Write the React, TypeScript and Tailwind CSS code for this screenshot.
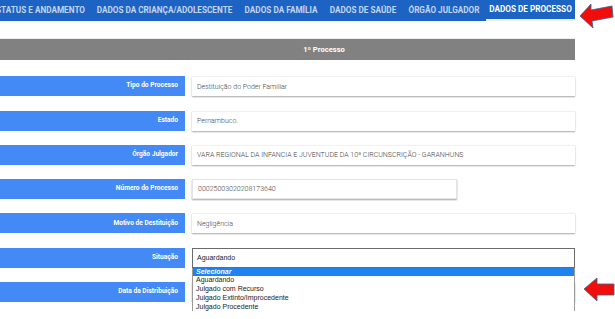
import React from "react";

const tabs = [
  { label: "STATUS E ANDAMENTO", w: "w-[91px] justify-end pr-[6px]" },
  { label: "DADOS DA CRIANÇA/ADOLESCENTE", w: "w-[147px] justify-center" },
  { label: "DADOS DA FAMÍLIA", w: "w-[86px] justify-center" },
  { label: "DADOS DE SAÚDE", w: "w-[78px] justify-center" },
  { label: "ÓRGÃO JULGADOR", w: "w-[84px] justify-center" },
  { label: "DADOS DE PROCESSO", w: "w-[89px] justify-center" },
];

const options = [
  "Selecionar",
  "Aguardando",
  "Julgado com Recurso",
  "Julgado Extinto/Improcedente",
  "Julgado Procedente",
];

function Label({ text }: { text: string }) {
  return (
    <div className="w-[185px] shrink-0 h-full bg-[#448af7] flex items-center justify-end pr-[7px] text-white text-[6.6px] font-bold">
      {text}
    </div>
  );
}

function Field({ label, value, narrow }: { label: string; value: string; narrow?: boolean }) {
  return (
    <div className="flex gap-[7px] h-[20px] mt-[14.3px]">
      <Label text={label} />
      <div
        className={`${narrow ? "w-[265px] border border-[#e4e4e4]" : "flex-1 border-t border-[#f0f0f0]"} h-full bg-white flex items-center pl-[5px] text-[7px] font-light text-[#444] shadow-[0_1px_1.5px_rgba(0,0,0,0.35)]`}
      >
        {value}
      </div>
    </div>
  );
}

export default function App() {
  return (
    <div className="relative w-[615px] h-[319px] overflow-hidden bg-white font-['Roboto',sans-serif]">
      <div className="w-[575px]">
        {/* Tabs */}
        <nav className="flex h-[21px] bg-[#1d63c4] overflow-hidden">
          {tabs.map((t, i) => {
            const active = i === tabs.length - 1;
            return (
              <div
                key={t.label}
                className={`${t.w} shrink-0 h-full flex items-center text-[8.2px] font-bold whitespace-nowrap ${
                  active ? "text-white border-b-2 border-[#eef2cf]" : "text-[#c2d6f3]"
                }`}
              >
                {t.label}
              </div>
            );
          })}
        </nav>

        <div className="h-[18px] border-b border-[#eeeeee]" />

        {/* Section header */}
        <div className="h-[21px] bg-[#818181] flex items-center justify-center pl-[73px] text-white text-[7.6px] font-bold">
          1º Processo
        </div>

        <div className="pt-[2px]">
          <Field label="Tipo do Processo" value="Destituição do Poder Familiar" />
          <Field label="Estado" value="Pernambuco." />
          <Field
            label="Órgão Julgador"
            value="VARA REGIONAL DA INFANCIA E JUVENTUDE DA 10ª CIRCUNSCRIÇÃO - GARANHUNS"
          />
          <Field label="Número do Processo" value="00025003020208173640" narrow />
          <Field label="Motivo de Destituição" value="Negligência" />

          {/* Situação select with open list */}
          <div className="flex gap-[7px] h-[20px] mt-[14.3px]">
            <Label text="Situação" />
            <div className="relative flex-1 h-full">
              <div className="h-full bg-white border border-[#6b6b6b] flex items-center pl-[4px] text-[7px] text-[#222] font-['Liberation_Sans',sans-serif]">
                Aguardando
              </div>
              <ul className="absolute left-0 right-0 top-full z-10 bg-white border-l border-r border-[#9a9a9a] font-['Liberation_Sans',sans-serif] text-[7px] text-[#222]">
                {options.map((o, i) => (
                  <li
                    key={o}
                    className={`h-[8.7px] leading-[8.7px] pl-[3px] ${
                      i === 0 ? "bg-[#1e82f0] text-white font-bold italic" : ""
                    }`}
                  >
                    {o}
                  </li>
                ))}
              </ul>
            </div>
          </div>

          <Field label="Data da Distribuição" value="" />
        </div>
      </div>

      {/* Annotation arrows */}
      <svg className="absolute left-0 top-0 pointer-events-none" width="615" height="319">
        <polygon
          points="580,16 591,4 591,10 612,6 613,17 592,21 593,28"
          fill="#f20d0d"
          stroke="#3b5f8a"
          strokeWidth="0.8"
        />
        <polygon
          points="584,289 597,278 597,284 614,284 614,295 597,295 597,301"
          fill="#f20d0d"
          stroke="#3b5f8a"
          strokeWidth="0.8"
        />
      </svg>
    </div>
  );
}
